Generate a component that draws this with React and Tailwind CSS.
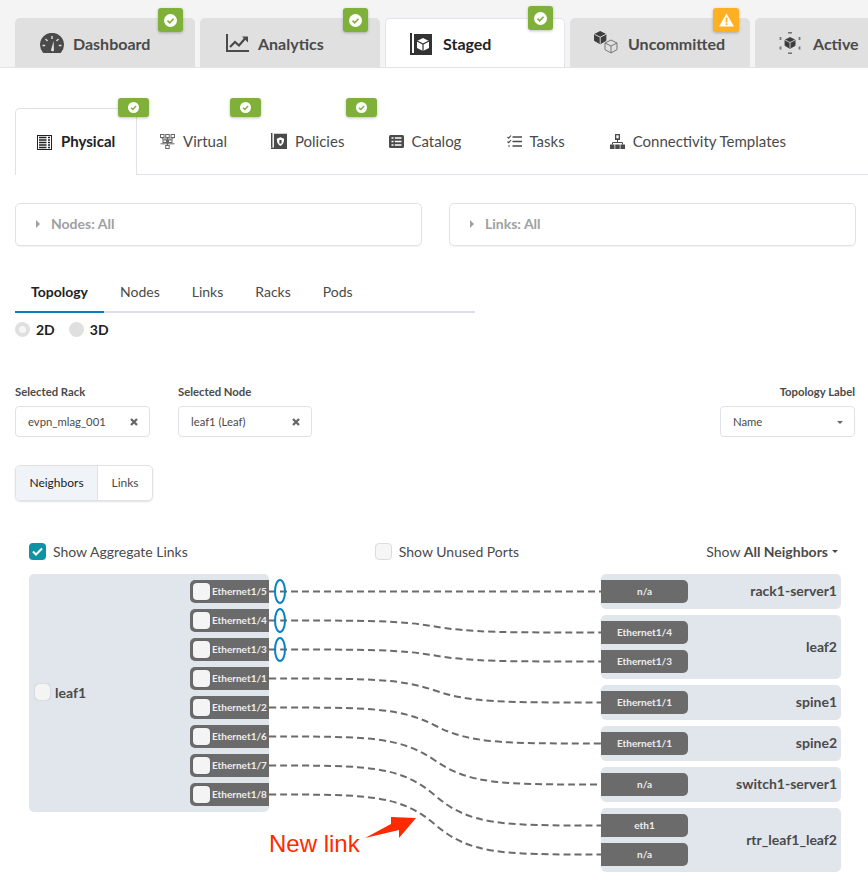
import React from "react";

const FONT = { fontFamily: "Lato, 'Noto Sans', sans-serif" };

const CheckGlyph = ({ size = 13 }) => (
  <svg width={size} height={size} viewBox="0 0 14 14">
    <circle cx="7" cy="7" r="7" fill="#fff" />
    <path d="M3.8 7.2l2.3 2.3 4.2-4.4" fill="none" stroke="#7fb13a" strokeWidth="1.8" />
  </svg>
);

const TopBadge = ({ warn, active }) => (
  <span className={`absolute flex h-[24px] items-center justify-center rounded-[3px] shadow-[0_1px_3px_rgba(0,0,0,0.25)] ${active ? "-top-[13px] right-[11px]" : "-top-[10px] right-[11px]"} ${warn ? "w-[26px] bg-[#fdb022]" : "w-[25px] bg-[#7fb13a]"} ${!warn && !active ? "right-[12px]" : ""}`}>
    {warn ? (
      <svg width="15" height="14" viewBox="0 0 15 14">
        <path d="M7.5 0.5L15 13.5H0z" fill="#fff" />
        <rect x="6.7" y="4.5" width="1.7" height="5" fill="#fdb022" />
        <rect x="6.7" y="10.3" width="1.7" height="1.7" fill="#fdb022" />
      </svg>
    ) : (
      <CheckGlyph />
    )}
  </span>
);

const SubBadge = ({ className }) => (
  <span className={`absolute flex h-[19px] w-[31px] items-center justify-center rounded-[3px] bg-[#7fb13a] shadow-[0_1px_3px_rgba(0,0,0,0.25)] ${className}`}>
    <CheckGlyph size={11} />
  </span>
);

const GaugeIcon = () => (
  <svg width="24" height="20" viewBox="0 0 24 20">
    <path d="M3.2 20A12 12 0 1 1 20.8 20z" fill="#4a4a4a" />
    <path d="M12 3v3M5.5 6l2 2M18.5 6l-2 2M2.5 12.5h2.7M21.5 12.5h-2.7" stroke="#e0e0e0" strokeWidth="1.4" />
    <path d="M11 17l2.6-9 .4 9.5a1.6 1.6 0 0 1-3 -.5z" fill="#e0e0e0" />
  </svg>
);

const ChartIcon = () => (
  <svg width="23" height="18" viewBox="0 0 23 18">
    <path d="M1 0v17h22" fill="none" stroke="#4a4a4a" strokeWidth="2" />
    <path d="M4 13l5-5 4 3.5 6-7" fill="none" stroke="#4a4a4a" strokeWidth="2.2" />
    <path d="M16 2.5h6v6z" fill="#4a4a4a" />
  </svg>
);

const CubeShape = ({ x, y, s, fill = "#3d3d3d", line = "#fff" }) => (
  <g transform={`translate(${x} ${y}) scale(${s})`}>
    <path d="M6 0l6 3v6.6L6 13 0 9.6V3z" fill={fill} stroke={fill} strokeWidth="1" />
    <path d="M0 3l6 3 6-3M6 6v7" fill="none" stroke={line} strokeWidth="1" />
  </g>
);

const BookIcon = ({ size = 22, dark = "#333", shield }) => (
  <svg width={size} height={size} viewBox="0 0 22 22">
    <rect x="0" y="0" width="2" height="20" fill={dark} />
    <rect x="0" y="20" width="5" height="2" fill={dark} />
    <rect x="4" y="1" width="18" height="21" fill={dark} />
    {shield ? (
      <path d="M13 6l5 1.8c0 5-1.5 8-5 10-3.5-2-5-5-5-10z" fill="#fff" />
    ) : (
      <g>
        <path d="M13 5l6 3v7l-6 3-6-3V8z" fill="#fff" />
        <path d="M7 8l6 3 6-3M13 11v7" fill="none" stroke={dark} strokeWidth="1.2" />
      </g>
    )}
    {shield && <path d="M13 9.5v5" stroke={dark} strokeWidth="3" />}
  </svg>
);

const UncommittedIcon = () => (
  <svg width="24" height="23" viewBox="0 0 24 23">
    <CubeShape x={0.5} y={0.5} s={0.95} fill="#3d3d3d" line="#e0e0e0" />
    <g transform="translate(11 9)">
      <path d="M6 0l6 3v6.6L6 13 0 9.6V3z" fill="none" stroke="#777" strokeWidth="1" />
      <path d="M0 3l6 3 6-3M6 6v7" fill="none" stroke="#777" strokeWidth="1" />
    </g>
  </svg>
);

const ActiveIcon = () => (
  <svg width="22" height="22" viewBox="0 0 22 22">
    <g fill="#777">
      <rect x="9" y="0" width="4" height="1.6" />
      <rect x="9" y="20.4" width="4" height="1.6" />
      <rect x="0.6" y="5" width="1.8" height="3" />
      <rect x="19.6" y="5" width="1.8" height="3" />
      <rect x="0.6" y="14.5" width="1.8" height="3" />
      <rect x="19.6" y="14.5" width="1.8" height="3" />
    </g>
    <CubeShape x={6} y={5.5} s={0.84} fill="#3d3d3d" line="#e0e0e0" />
  </svg>
);

const RackIcon = () => (
  <svg width="15" height="15" viewBox="0 0 15 15">
    <rect x="0.5" y="0.5" width="14" height="14" fill="none" stroke="#222" />
    {[2.5, 5, 7.5, 10, 12.5].map((y) => (
      <path key={y} d={`M2 ${y}h7.5M11 ${y}h2`} stroke="#222" strokeWidth="1.4" />
    ))}
  </svg>
);

const VirtualIcon = () => (
  <svg width="15" height="15" viewBox="0 0 15 15" fill="none" stroke="#666">
    <rect x="0.5" y="0.5" width="3.5" height="3" />
    <rect x="5.7" y="0.5" width="3.5" height="3" />
    <rect x="11" y="0.5" width="3.5" height="3" />
    <rect x="3" y="6" width="3.5" height="2.5" />
    <rect x="8.5" y="6" width="3.5" height="2.5" />
    <rect x="5.7" y="11.5" width="3.5" height="3" />
    <path d="M2.2 3.5V5H12.8V3.5M7.5 3.5V11.5M0.5 9.8H14.5" />
  </svg>
);

const CatalogIcon = () => (
  <svg width="15" height="13" viewBox="0 0 15 13">
    <rect width="15" height="13" rx="1.5" fill="#4a4a4a" />
    {[3, 6.5, 10].map((y) => (
      <path key={y} d={`M2.5 ${y}h2M5.8 ${y}h6.7`} stroke="#fff" strokeWidth="1.6" />
    ))}
  </svg>
);

const TasksIcon = () => (
  <svg width="15" height="13" viewBox="0 0 15 13" fill="none" stroke="#4a4a4a">
    <path d="M0.5 2l1.2 1.2L4 .5M0.5 6.5l1.2 1.2L4 5M1 11h2" strokeWidth="1.1" />
    <path d="M5.5 2h9.5M5.5 6.5h9.5M5.5 11h9.5" strokeWidth="1.5" />
  </svg>
);

const TemplatesIcon = () => (
  <svg width="15" height="15" viewBox="0 0 15 15">
    <path d="M5 0h5v6H5z" fill="#4a4a4a" />
    <rect x="6.3" y="1.3" width="2.4" height="3" fill="#fff" />
    <path d="M7.5 6v3M2.5 10.5V8.5h10v2" fill="none" stroke="#4a4a4a" />
    <rect x="0" y="10.5" width="4.5" height="4.5" fill="#4a4a4a" />
    <rect x="5.25" y="10.5" width="4.5" height="4.5" fill="#4a4a4a" />
    <rect x="10.5" y="10.5" width="4.5" height="4.5" fill="#4a4a4a" />
  </svg>
);

const XIcon = () => (
  <svg width="8" height="8" viewBox="0 0 8 8">
    <path d="M1 1l6 6M7 1L1 7" stroke="#666" strokeWidth="2.3" />
  </svg>
);

const TopTab = ({ icon, label, badge, active, warn, iconClass = "justify-center" }) => (
  <div
    className={
      active
        ? "relative -mb-px flex h-[50px] w-[180px] shrink-0 items-center rounded-t-[5px] border border-b-0 border-[#e2e4ec] bg-white pl-[24px]"
        : "relative flex h-[49px] w-[180px] shrink-0 items-center rounded-t-[5px] bg-[#e0e0e0] pl-[25px]"
    }
  >
    {badge && <TopBadge warn={warn} active={active} />}
    <span className={`flex w-[24px] items-center ${iconClass}`}>{icon}</span>
    <span className={`ml-[9px] text-[16px] font-bold ${active ? "pt-[1px] text-[#222]" : "pt-[2px] text-[#4a4a4a]"}`}>{label}</span>
  </div>
);

const SubTab = ({ icon, label, badge, className }) => (
  <div className={`relative flex h-[66px] items-center text-[15px] text-[#4a4a4a] ${className}`}>
    {badge}
    {icon}
    <span>{label}</span>
  </div>
);

const Port = ({ label }) => (
  <div className="flex h-[23px] w-[79px] items-center rounded-l-[5px] bg-[#6b6b6b] pl-[3px]">
    <span className="h-[17px] w-[17px] rounded-[4px] bg-[#f4f4f4] shadow-[0_0_1px_rgba(0,0,0,0.4)]" />
    <span className="ml-[2px] text-[10px] font-bold text-[#eeeeee]">{label}</span>
  </div>
);

const FarPort = ({ label }) => (
  <div className="flex h-[23px] w-[87px] items-center justify-center rounded-r-[5px] bg-[#6b6b6b] text-[10px] font-bold text-[#eeeeee]">
    {label}
  </div>
);

const Neighbor = ({ name, ports }) => (
  <div className="flex items-center justify-between rounded-[5px] bg-[#e1e5ec] py-[6px] pr-[4px]">
    <div className="flex flex-col gap-[6px]">
      {ports.map((p, i) => (
        <FarPort key={i} label={p} />
      ))}
    </div>
    <span className="pb-[2px] text-[14px] font-bold text-[#4a4a4a]">{name}</span>
  </div>
);

const Box = ({ children }) => (
  <div className="flex h-[31px] items-center justify-between rounded-[4px] border border-[#e0e2e8] pl-[12px] pr-[11px] pt-[1px] text-[11.3px] text-[#4a4a4a]">
    {children}
  </div>
);

const Accordion = ({ label }) => (
  <div className="flex h-[43px] flex-1 items-center rounded-[5px] border border-[#e0e2e8] pb-[2px] pl-[20px] shadow-[0_1px_1px_rgba(0,0,0,0.05)]">
    <span className="h-0 w-0 border-y-[4px] border-l-[4px] border-y-transparent border-l-[#a0a0a0]" />
    <span className="ml-[11px] text-[14px] font-bold text-[#a0a0a0]">{label}</span>
  </div>
);

const PORTS = ["Ethernet1/5", "Ethernet1/4", "Ethernet1/3", "Ethernet1/1", "Ethernet1/2", "Ethernet1/6", "Ethernet1/7", "Ethernet1/8"];
const LINKS = [
  [17.5, 17.5],
  [46.5, 58.5],
  [75.5, 87.5],
  [104.5, 128.5],
  [133.5, 169.5],
  [162.5, 210.5],
  [191.5, 251.5],
  [220.5, 280.5],
];

const linkPath = (a, b) => {
  if (a === b) return `M0 ${a}H332`;
  const m = (a + b) / 2;
  return `M0 ${a}C100 ${a} 131 ${a} 166 ${m}C201 ${b} 232 ${b} 332 ${b}`;
};

export default function App() {
  return (
    <div className="h-[891px] w-[868px] overflow-hidden bg-white" style={FONT}>
      <div className="flex h-[68px] items-end gap-[5px] overflow-hidden border-b border-[#e2e4ec] bg-[#f4f4f4] pl-[15px] pt-[6px]">
        <TopTab icon={<GaugeIcon />} label="Dashboard" badge />
        <TopTab icon={<ChartIcon />} label="Analytics" badge />
        <TopTab icon={<BookIcon />} label="Staged" badge active iconClass="justify-start" />
        <TopTab icon={<UncommittedIcon />} label="Uncommitted" badge warn iconClass="justify-start -ml-[1px] mr-[1px]" />
        <TopTab icon={<ActiveIcon />} label="Active" iconClass="justify-start -ml-[1px] mr-[1px]" />
      </div>

      <div className="mt-[40px] flex items-end pl-[15px]">
        <div className="relative flex h-[67px] w-[122px] items-center gap-[9px] rounded-t-[5px] border border-b-0 border-[#e0e2ea] pl-[21px] text-[15px] font-bold text-[#222]">
          <SubBadge className="-top-[11px] -right-[13px]" />
          <RackIcon />
          <span className="pb-[2px]">Physical</span>
        </div>
        <div className="flex flex-1 border-b border-[#e0e2ea]">
          <SubTab className="gap-[8px] pl-[23px] pr-[22px]" icon={<VirtualIcon />} label="Virtual" badge={<SubBadge className="-top-[10px] -right-[12px]" />} />
          <SubTab className="gap-[8px] pl-[22px] pr-[22px]" icon={<BookIcon size={16} dark="#4a4a4a" shield />} label="Policies" badge={<SubBadge className="-top-[10px] -right-[11px]" />} />
          <SubTab className="gap-[7px] px-[23px]" icon={<CatalogIcon />} label="Catalog" />
          <SubTab className="gap-[7px] pl-[23px] pr-[22px]" icon={<TasksIcon />} label="Tasks" />
          <SubTab className="gap-[8px] pl-[23px]" icon={<TemplatesIcon />} label="Connectivity Templates" />
        </div>
      </div>

      <div className="mt-[28px] flex gap-[27px] pl-[15px] pr-[12px]">
        <Accordion label="Nodes: All" />
        <Accordion label="Links: All" />
      </div>

      <div className="ml-[15px] mt-[34px] flex h-[33px] w-[460px] border-b-2 border-[#dde0e8] text-[14px] text-[#4a4a4a]">
        <div className="-mb-[2px] flex h-[33px] items-start border-b-2 border-[#0a7fc2] px-[16px] pt-[1px] font-bold text-[#222]">Topology</div>
        <div className="px-[16px] pt-[1px]">Nodes</div>
        <div className="px-[16px] pt-[1px]">Links</div>
        <div className="px-[16px] pt-[1px]">Racks</div>
        <div className="px-[16px] pt-[1px]">Pods</div>
      </div>

      <div className="ml-[15px] mt-[8px] flex h-[17px] items-center text-[14px] font-bold text-[#222]">
        <span className="flex h-[15px] w-[15px] items-center justify-center rounded-full bg-[#dfdfdf]">
          <span className="h-[7px] w-[7px] rounded-full bg-[#f6f6f6]" />
        </span>
        <span className="ml-[6px]">2D</span>
        <span className="ml-[14px] h-[15px] w-[15px] rounded-full bg-[#dfdfdf]" />
        <span className="ml-[6px]">3D</span>
      </div>

      <div className="mt-[47px] flex pl-[15px] pr-[13px]">
        <div className="w-[135px]">
          <div className="mb-[7px] h-[14px] text-[11.3px] font-bold leading-[14px] text-[#4a4a4a]">Selected Rack</div>
          <Box>
            <span>evpn_mlag_001</span>
            <XIcon />
          </Box>
        </div>
        <div className="ml-[28px] w-[134px]">
          <div className="mb-[7px] h-[14px] text-[11.3px] font-bold leading-[14px] text-[#4a4a4a]">Selected Node</div>
          <Box>
            <span>leaf1 (Leaf)</span>
            <XIcon />
          </Box>
        </div>
        <div className="ml-auto w-[135px]">
          <div className="mb-[7px] h-[14px] text-right text-[11.3px] font-bold leading-[14px] text-[#4a4a4a]">Topology Label</div>
          <Box>
            <span>Name</span>
            <span className="h-0 w-0 border-x-[3px] border-t-[3px] border-x-transparent border-t-[#666]" />
          </Box>
        </div>
      </div>

      <div className="ml-[15px] mt-[28px] flex h-[36px] w-[138px] overflow-hidden rounded-[5px] border border-[#e0e2e8] text-[12px] shadow-[0_1px_2px_rgba(0,0,0,0.12)]">
        <div className="flex w-[82px] items-center justify-center border-r border-[#e0e2e8] bg-[#f0f3f8] text-[#222]">Neighbors</div>
        <div className="flex flex-1 items-center justify-center text-[#4a4a4a]">Links</div>
      </div>

      <div className="ml-[29px] mt-[41px] flex h-[18px] w-[809px] items-center text-[14px] text-[#4a4a4a]">
        <span className="flex h-[17px] w-[17px] items-center justify-center rounded-[4px] bg-[#0d93a5]">
          <svg width="11" height="9" viewBox="0 0 11 9">
            <path d="M1 4.5l3 3 6-6" fill="none" stroke="#fff" strokeWidth="2" />
          </svg>
        </span>
        <span className="ml-[7px]">Show Aggregate Links</span>
        <span className="ml-[187px] h-[17px] w-[17px] rounded-[4px] border border-[#dcdcdc] bg-[#f6f6f6]" />
        <span className="ml-[7px]">Show Unused Ports</span>
        <span className="ml-auto">
          Show <span className="font-bold">All Neighbors</span>
        </span>
        <span className="ml-[4px] h-0 w-0 border-x-[3px] border-t-[3px] border-x-transparent border-t-[#4a4a4a]" />
      </div>

      <div className="relative ml-[29px] mt-[14px] flex w-[812px] items-start justify-between">
        <div className="flex h-[238px] w-[240px] items-center justify-between rounded-[5px] bg-[#e1e5ec] pl-[6px]">
          <div className="flex items-center pb-[2px]">
            <span className="h-[16px] w-[15px] rounded-[4px] bg-[#f4f4f4] shadow-[0_0_1px_rgba(0,0,0,0.4)]" />
            <span className="ml-[5px] text-[14px] font-bold text-[#4a4a4a]">leaf1</span>
          </div>
          <div className="flex flex-col gap-[6px]">
            {PORTS.map((p) => (
              <Port key={p} label={p} />
            ))}
          </div>
        </div>

        <div className="flex w-[240px] flex-col gap-[6px]">
          <Neighbor name="rack1-server1" ports={["n/a"]} />
          <Neighbor name="leaf2" ports={["Ethernet1/4", "Ethernet1/3"]} />
          <Neighbor name="spine1" ports={["Ethernet1/1"]} />
          <Neighbor name="spine2" ports={["Ethernet1/1"]} />
          <Neighbor name="switch1-server1" ports={["n/a"]} />
          <Neighbor name="rtr_leaf1_leaf2" ports={["eth1", "n/a"]} />
        </div>

        <svg className="absolute left-[240px] top-0" width="332" height="298" viewBox="0 0 332 298" fill="none">
          {LINKS.map(([a, b], i) => (
            <path key={i} d={linkPath(a, b)} stroke="#6b6b6b" strokeWidth="2" strokeDasharray="7 4" />
          ))}
          {[17.5, 46.5, 75.5].map((y) => (
            <ellipse key={y} cx="11" cy={y} rx="5" ry="11.5" stroke="#0a83c4" strokeWidth="2" />
          ))}
          <path d="M96 264L122 250 122 243 147 244 130 264 130 256z" fill="#ff2a00" />
        </svg>

        <span className="absolute left-[240px] top-[256px] text-[24px] leading-[28px] text-[#ff2a00]" style={{ fontFamily: "'Liberation Sans', sans-serif" }}>
          New link
        </span>
      </div>
    </div>
  );
}
